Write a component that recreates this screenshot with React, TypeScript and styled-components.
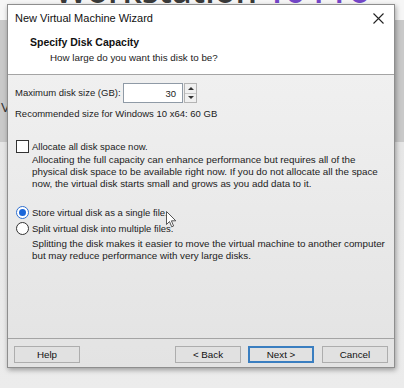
import React from 'react';
import styled, { createGlobalStyle } from 'styled-components';

const GlobalStyle = createGlobalStyle`
  html, body {
    margin: 0;
    padding: 0;
  }
  body {
    width: 404px;
    height: 388px;
    overflow: hidden;
    background: #e9e9e9;
    font-family: "Liberation Sans", Arial, sans-serif;
    color: #1b1b1b;
  }
`;

const Screen = styled.div`
  position: relative;
  width: 404px;
  height: 388px;
  box-sizing: border-box;
  overflow: hidden;
  padding: 4px 9px 0 7px;
  background: linear-gradient(
    #f6f6f6 0,
    #f6f6f6 20px,
    #c9c9c9 20px,
    #c9c9c9 142px,
    #e6e6e6 142px,
    #ececec 100%
  );
`;

/* only the feet of the app's big heading peek out above the dialog */
const TopStrip = styled.div`
  position: absolute;
  left: 0;
  top: 0;
  width: 404px;
  height: 4px;
  overflow: hidden;
`;

const BackdropTitle = styled.div`
  position: absolute;
  left: 55px;
  bottom: -3px;
  font-family: "Open Sans", sans-serif;
  font-size: 34px;
  line-height: 34px;
  font-weight: 600;
  color: #3a3a3a;
  white-space: nowrap;

  span {
    color: #7446c8;
  }
`;

const BackdropLetter = styled.div`
  position: absolute;
  left: 1px;
  top: 100px;
  font-size: 13px;
  color: #333;
`;

const Dialog = styled.div`
  position: relative;
  z-index: 1;
  width: 388px;
  height: 364px;
  box-sizing: border-box;
  border: 1px solid #8e8e8e;
  box-shadow: 1px 2px 5px rgba(0, 0, 0, 0.35);
  display: flex;
  flex-direction: column;
  background: linear-gradient(#f3f3f3, #e3e3e3);
`;

const TitleBar = styled.div`
  height: 26px;
  display: flex;
  align-items: center;
  justify-content: space-between;
  padding: 0 7px;
  background: #ffffff;
  font-size: 11px;
  color: #111;
`;

const CloseIcon = styled.svg`
  width: 11px;
  height: 11px;
  margin-right: 3px;
`;

const Header = styled.div`
  background: #ffffff;
  padding: 4px 0 9px 22px;
  border-bottom: 1px solid #a4a4a4;
  display: flex;
  flex-direction: column;
  gap: 2px;
`;

const HeaderTitle = styled.div`
  font-size: 10.5px;
  font-weight: 700;
  line-height: 14px;
  color: #111;
`;

const HeaderSub = styled.div`
  font-size: 9.8px;
  line-height: 14px;
  padding-left: 20px;
`;

const Body = styled.div`
  flex: 1;
  padding: 8px 7px 0 7px;
  display: flex;
  flex-direction: column;
  font-size: 9.5px;
`;

const SizeRow = styled.div`
  display: flex;
  align-items: center;
  height: 20px;
`;

const Label = styled.span`
  width: 108px;
  line-height: 14px;
  white-space: nowrap;
`;

const NumberField = styled.div`
  width: 60px;
  height: 20px;
  box-sizing: border-box;
  border: 1px solid #8f9aa6;
  background: #fff;
  display: flex;
  align-items: center;
  justify-content: flex-end;
  padding-right: 6px;
  font-size: 9.5px;
`;

const Spinner = styled.div`
  width: 13px;
  height: 20px;
  margin-left: 1px;
  box-sizing: border-box;
  border: 1px solid #b4b4b4;
  display: flex;
  flex-direction: column;
  background: #f0f0f0;
`;

const SpinHalf = styled.div<{ $up?: boolean }>`
  flex: 1;
  display: flex;
  align-items: center;
  justify-content: center;
  border-bottom: ${p => (p.$up ? '1px solid #c8c8c8' : 'none')};

  &::after {
    content: '';
    border-left: 3px solid transparent;
    border-right: 3px solid transparent;
    ${p => (p.$up ? 'border-bottom: 3px solid #333;' : 'border-top: 3px solid #333;')}
  }
`;

const Line = styled.div<{ $top?: number }>`
  line-height: 14px;
  margin-top: ${p => p.$top ?? 0}px;
`;

const OptionRow = styled.div<{ $top?: number }>`
  display: flex;
  align-items: center;
  gap: 3px;
  height: 14px;
  margin-top: ${p => p.$top ?? 0}px;
  padding-left: 1px;
`;

const CheckBox = styled.span`
  width: 13px;
  height: 13px;
  box-sizing: border-box;
  border: 1px solid #333;
  background: #fff;
`;

const Radio = styled.span<{ $on?: boolean }>`
  width: 13px;
  height: 13px;
  box-sizing: border-box;
  border-radius: 50%;
  border: 1px solid ${p => (p.$on ? '#2f6fcf' : '#333')};
  background: #fff;
  display: flex;
  align-items: center;
  justify-content: center;

  &::after {
    content: '';
    width: 7px;
    height: 7px;
    border-radius: 50%;
    background: ${p => (p.$on ? '#1a66d9' : 'transparent')};
  }
`;

const Description = styled.div<{ $top?: number }>`
  padding-left: 17px;
  line-height: 12px;
  font-size: 9.8px;
  white-space: nowrap;
  margin-top: ${p => p.$top ?? 0}px;
`;

const Footer = styled.div`
  height: 29px;
  box-sizing: border-box;
  border-top: 1px solid #a4a4a4;
  padding: 7px 6px 0 6px;
  display: flex;
  align-items: flex-start;
`;

const Button = styled.div<{ $default?: boolean; $gap?: number }>`
  width: 66px;
  height: 17px;
  box-sizing: border-box;
  margin-left: ${p => p.$gap ?? 0}px;
  border: ${p => (p.$default ? '2px solid #3a7ec0' : '1px solid #adadad')};
  background: #e1e1e1;
  display: flex;
  align-items: center;
  justify-content: center;
  font-size: 9.8px;
  color: #111;
`;

const Spacer = styled.div`
  flex: 1;
`;

const Cursor = styled.svg`
  position: absolute;
  left: 166px;
  top: 211px;
  width: 11px;
  height: 17px;
  z-index: 2;
`;

export default function App() {
  return (
    <>
      <GlobalStyle />
      <Screen>
        <TopStrip>
          <BackdropTitle>
            Workstation <span>16 Pro</span>
          </BackdropTitle>
        </TopStrip>
        <BackdropLetter>V</BackdropLetter>

        <Dialog>
          <TitleBar>
            <span>New Virtual Machine Wizard</span>
            <CloseIcon viewBox="0 0 11 11">
              <path d="M0.5 0.5 L10.5 10.5 M10.5 0.5 L0.5 10.5" stroke="#222" strokeWidth="1.1" />
            </CloseIcon>
          </TitleBar>

          <Header>
            <HeaderTitle>Specify Disk Capacity</HeaderTitle>
            <HeaderSub>How large do you want this disk to be?</HeaderSub>
          </Header>

          <Body>
            <SizeRow>
              <Label>Maximum disk size (GB):</Label>
              <NumberField>30</NumberField>
              <Spinner>
                <SpinHalf $up />
                <SpinHalf />
              </Spinner>
            </SizeRow>
            <Line $top={4}>Recommended size for Windows 10 x64: 60 GB</Line>

            <OptionRow $top={18}>
              <CheckBox />
              <span>Allocate all disk space now.</span>
            </OptionRow>
            <Description $top={1}>
              Allocating the full capacity can enhance performance but requires all of the
              <br />
              physical disk space to be available right now. If you do not allocate all the space
              <br />
              now, the virtual disk starts small and grows as you add data to it.
            </Description>

            <OptionRow $top={15}>
              <Radio $on />
              <span>Store virtual disk as a single file.</span>
            </OptionRow>
            <OptionRow $top={2}>
              <Radio />
              <span>Split virtual disk into multiple files.</span>
            </OptionRow>
            <Description $top={3}>
              Splitting the disk makes it easier to move the virtual machine to another computer
              <br />
              but may reduce performance with very large disks.
            </Description>
          </Body>

          <Footer>
            <Button>Help</Button>
            <Spacer />
            <Button>&lt; Back</Button>
            <Button $default $gap={7}>Next &gt;</Button>
            <Button $gap={8}>Cancel</Button>
          </Footer>
        </Dialog>

        <Cursor viewBox="0 0 11 17">
          <path d="M0.5 0.5 L0.5 13.5 L3.5 10.5 L5.7 15.8 L7.6 15 L5.4 9.8 L9.8 9.8 Z" fill="#fff" stroke="#444" strokeWidth="0.9" />
        </Cursor>
      </Screen>
    </>
  );
}
